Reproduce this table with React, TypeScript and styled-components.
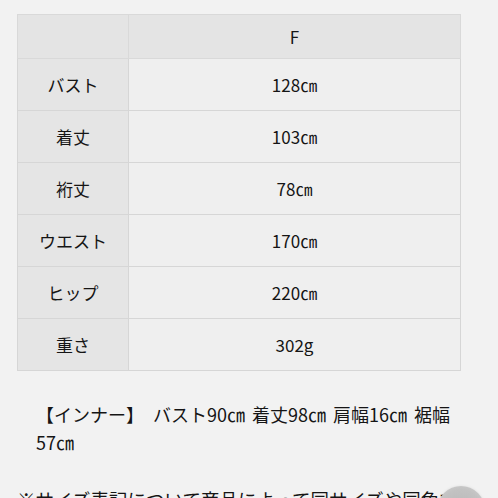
import React from "react";
import styled, { createGlobalStyle } from "styled-components";

const GlobalStyle = createGlobalStyle`
  html, body {
    margin: 0;
    padding: 0;
    background: #f2f2f2;
    overflow: hidden;
  }
  body {
    font-family: "Noto Sans CJK JP", "Noto Sans", sans-serif;
    color: #151515;
  }
`;

const Page = styled.div`
  display: flex;
  flex-direction: column;
  padding: 14px 0 0 17px;
`;

const SizeTable = styled.table`
  width: 444px;
  border-collapse: collapse;
  table-layout: fixed;
  font-size: 17px;
`;

const HeadCell = styled.th<{ $label?: boolean }>`
  height: 43px;
  padding: 0;
  background: #e4e4e4;
  border: 1px solid #d9d9d9;
  font-weight: 400;
  text-align: center;
  width: ${(p) => (p.$label ? "110px" : "auto")};
  color: #151515;
`;

const LabelCell = styled.th`
  height: 51px;
  padding: 0;
  background: #e5e5e5;
  border: 1px solid #d6d6d6;
  font-weight: 400;
  text-align: center;
  color: #151515;
`;

const ValueCell = styled.td`
  height: 51px;
  padding: 0;
  background: #efefef;
  border: 1px solid #d6d6d6;
  text-align: center;
  color: #151515;
`;

const Inner = styled.p`
  margin: 29px 0 0 19px;
  width: 436px;
  font-size: 18px;
  line-height: 28px;
  word-spacing: 3px;
  color: #151515;
`;

const Measure = styled.span`
  white-space: nowrap;
`;

const Note = styled.p`
  margin: 29px 0 0 0;
  width: 446px;
  font-size: 18.5px;
  line-height: 28px;
  color: #151515;
`;

const TopButton = styled.div`
  position: fixed;
  left: 437px;
  top: 486px;
  width: 48px;
  height: 48px;
  border-radius: 50%;
  background: radial-gradient(circle at 50% 50%, #b8b8b8 0%, #c2c2c2 60%, #d4d4d4 100%);
  box-shadow: 0 0 3px rgba(0, 0, 0, 0.08);
`;

const rows: [string, string][] = [
  ["バスト", "128㎝"],
  ["着丈", "103㎝"],
  ["裄丈", "78㎝"],
  ["ウエスト", "170㎝"],
  ["ヒップ", "220㎝"],
  ["重さ", "302g"],
];

const inner: [string, string][] = [
  ["バスト", "90㎝"],
  ["着丈", "98㎝"],
  ["肩幅", "16㎝"],
  ["裾幅", "57㎝"],
];

export default function App() {
  return (
    <>
      <GlobalStyle />
      <Page>
        <SizeTable>
          <thead>
            <tr>
              <HeadCell $label></HeadCell>
              <HeadCell>F</HeadCell>
            </tr>
          </thead>
          <tbody>
            {rows.map(([label, value]) => (
              <tr key={label}>
                <LabelCell>{label}</LabelCell>
                <ValueCell>{value}</ValueCell>
              </tr>
            ))}
          </tbody>
        </SizeTable>
        <Inner>
          {"【インナー】\u3000"}
          {inner.map(([label, value], i) => (
            <React.Fragment key={label}>
              {i > 0 ? " " : ""}
              {label}
              <Measure>{value}</Measure>
            </React.Fragment>
          ))}
        </Inner>
        <Note>※サイズ表記について商品によって同サイズや同色でも多少の誤差がございます。</Note>
      </Page>
      <TopButton />
    </>
  );
}
